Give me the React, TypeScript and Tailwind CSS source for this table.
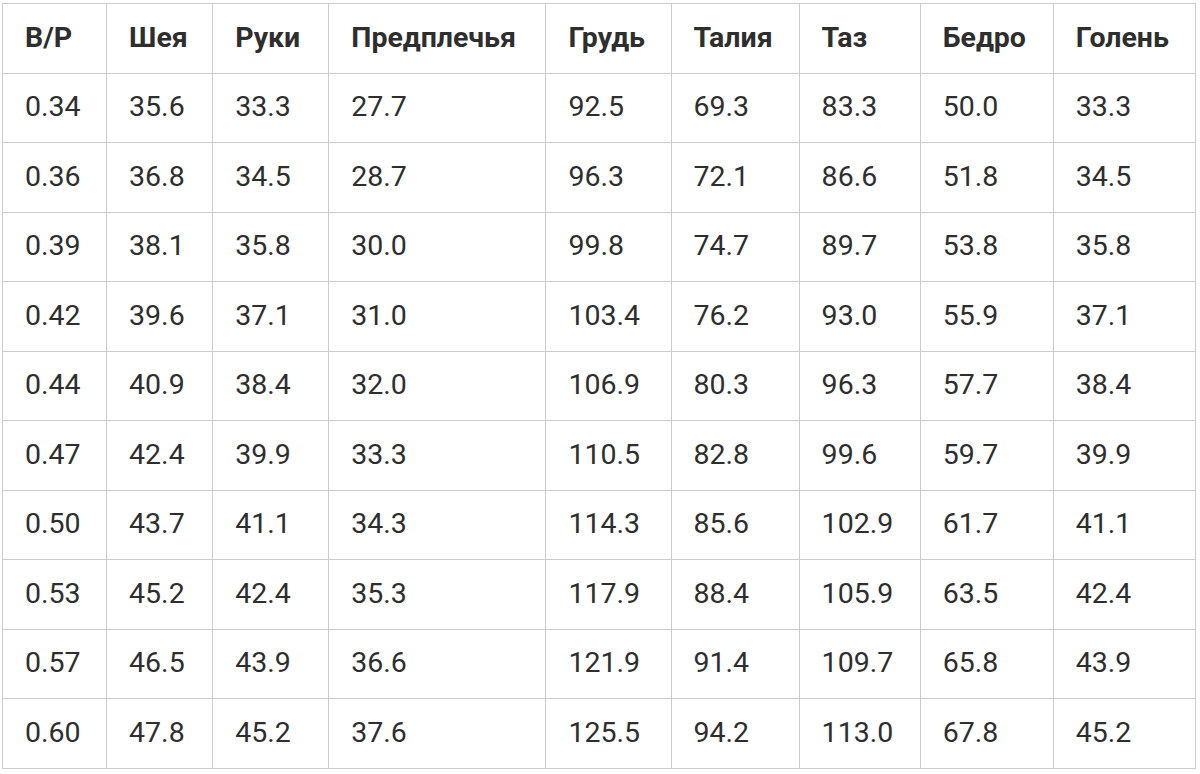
const headers = ["В/Р", "Шея", "Руки", "Предплечья", "Грудь", "Талия", "Таз", "Бедро", "Голень"];

const widths = [104, 106, 116, 217, 125, 128, 121, 133, 142];

const rows = [
  ["0.34", "35.6", "33.3", "27.7", "92.5", "69.3", "83.3", "50.0", "33.3"],
  ["0.36", "36.8", "34.5", "28.7", "96.3", "72.1", "86.6", "51.8", "34.5"],
  ["0.39", "38.1", "35.8", "30.0", "99.8", "74.7", "89.7", "53.8", "35.8"],
  ["0.42", "39.6", "37.1", "31.0", "103.4", "76.2", "93.0", "55.9", "37.1"],
  ["0.44", "40.9", "38.4", "32.0", "106.9", "80.3", "96.3", "57.7", "38.4"],
  ["0.47", "42.4", "39.9", "33.3", "110.5", "82.8", "99.6", "59.7", "39.9"],
  ["0.50", "43.7", "41.1", "34.3", "114.3", "85.6", "102.9", "61.7", "41.1"],
  ["0.53", "45.2", "42.4", "35.3", "117.9", "88.4", "105.9", "63.5", "42.4"],
  ["0.57", "46.5", "43.9", "36.6", "121.9", "91.4", "109.7", "65.8", "43.9"],
  ["0.60", "47.8", "45.2", "37.6", "125.5", "94.2", "113.0", "67.8", "45.2"],
];

export default function App() {
  return (
    <div className="w-[1200px] h-[774px] bg-white pl-[2px] pt-[3px] font-['Roboto',sans-serif] text-[#2e2e2e]">
      <table className="table-fixed border-collapse w-[1194px]">
        <colgroup>
          {widths.map((w, i) => (
            <col key={i} style={{ width: w }} />
          ))}
        </colgroup>
        <thead>
          <tr className="h-[69.5px]">
            {headers.map((h) => (
              <th key={h} className="border border-[#cccccc] px-[22px] text-left text-[28.5px] font-bold">
                {h}
              </th>
            ))}
          </tr>
        </thead>
        <tbody>
          {rows.map((r, i) => (
            <tr key={i} className="h-[69.5px]">
              {r.map((c, j) => (
                <td key={j} className="border border-[#cccccc] px-[22px] text-left text-[28.5px] font-normal">
                  {c}
                </td>
              ))}
            </tr>
          ))}
        </tbody>
      </table>
    </div>
  );
}
